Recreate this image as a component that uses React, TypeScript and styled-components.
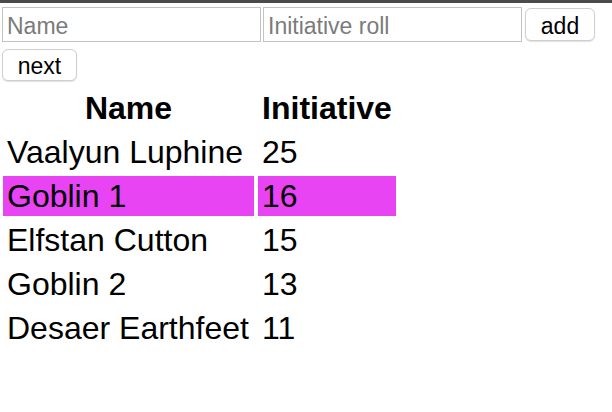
import React from "react";
import styled, { createGlobalStyle } from "styled-components";

const GlobalStyle = createGlobalStyle`
  html, body {
    margin: 0;
    padding: 0;
    background: #ffffff;
    font-family: "Liberation Sans", Arial, sans-serif;
    color: #000;
  }
`;

const TopBar = styled.div`
  height: 3px;
  background: #4b4b4b;
`;

const Page = styled.div`
  padding: 4px 0 0 2px;
`;

const FormRow = styled.div`
  display: flex;
  align-items: center;
  gap: 2px;
`;

const TextInput = styled.input`
  box-sizing: border-box;
  width: 259px;
  height: 35px;
  border: 1px solid #c3c3c3;
  border-radius: 0;
  padding: 3px 4px 0;
  font-family: "Liberation Sans", Arial, sans-serif;
  font-size: 23px;
  color: #000;
  background: #fff;
  outline: none;
  &::placeholder {
    color: #7b7b7b;
  }
`;

const Button = styled.button<{ $w: number; $h: number }>`
  box-sizing: border-box;
  width: ${(p) => p.$w}px;
  height: ${(p) => p.$h}px;
  border: 1px solid #cfcfcf;
  border-radius: 6px;
  background: #fff;
  box-shadow: 0 1px 1px rgba(0, 0, 0, 0.12);
  font-family: "Liberation Sans", Arial, sans-serif;
  font-size: 23px;
  color: #000;
  padding: 3px 0 0;
`;

const AddButton = styled(Button)`
  margin-left: 1px;
`;

const NextButton = styled(Button)`
  margin-top: 7px;
  display: block;
`;

const Table = styled.table`
  border-collapse: separate;
  border-spacing: 4px;
  margin: 3px 0 0 -3px;
`;

const HeadCell = styled.th`
  font-size: 32px;
  font-weight: bold;
  line-height: 38px;
  padding: 1px 4px 1px;
  text-align: center;
`;

const Cell = styled.td<{ $active?: boolean; $w: number }>`
  width: ${(p) => p.$w}px;
  box-sizing: border-box;
  font-size: 32px;
  line-height: 38px;
  padding: 1px 4px 1px;
  text-align: left;
  white-space: nowrap;
  background: ${(p) => (p.$active ? "#e844f4" : "transparent")};
`;

const combatants = [
  { name: "Vaalyun Luphine", init: 25 },
  { name: "Goblin 1", init: 16 },
  { name: "Elfstan Cutton", init: 15 },
  { name: "Goblin 2", init: 13 },
  { name: "Desaer Earthfeet", init: 11 },
];

export default function App() {
  const current = 1;
  return (
    <>
      <GlobalStyle />
      <TopBar />
      <Page>
        <FormRow>
          <TextInput placeholder="Name" />
          <TextInput placeholder="Initiative roll" />
          <AddButton $w={70} $h={33}>add</AddButton>
        </FormRow>
        <NextButton $w={75} $h={32}>next</NextButton>
        <Table>
          <thead>
            <tr>
              <HeadCell>Name</HeadCell>
              <HeadCell>Initiative</HeadCell>
            </tr>
          </thead>
          <tbody>
            {combatants.map((c, i) => (
              <tr key={c.name}>
                <Cell $w={251} $active={i === current}>{c.name}</Cell>
                <Cell $w={138} $active={i === current}>{c.init}</Cell>
              </tr>
            ))}
          </tbody>
        </Table>
      </Page>
    </>
  );
}
